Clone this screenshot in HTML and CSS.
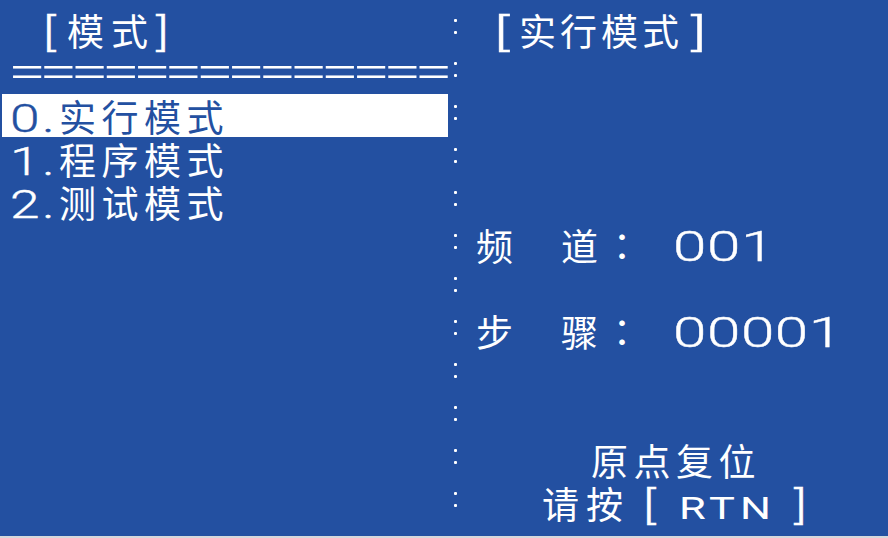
FILE: index.html
```html
<!DOCTYPE html>
<html lang="zh">
<head>
<meta charset="utf-8">
<title>模式</title>
<link rel="stylesheet" href="styles.css">
</head>
<body>
<div class="screen">
  <div class="row">
    <div class="l ltitle"><span class="bkt bo1">[</span><span class="cj t1">模式</span><span class="bkt bc1">]</span></div>
    <div class="sep"></div>
    <div class="r rtitle"><span class="bkt bo2">[</span><span class="cj t2">实行模式</span><span class="bkt bc2">]</span></div>
  </div>
  <div class="row">
    <div class="l rule"><span class="eq">==============</span></div>
    <div class="sep"></div>
    <div class="r"></div>
  </div>
  <div class="row">
    <div class="l item active"><span class="idx">0.</span><span class="cj menu">实行模式</span></div>
    <div class="sep"></div>
    <div class="r"></div>
  </div>
  <div class="row">
    <div class="l item"><span class="idx">1.</span><span class="cj menu">程序模式</span></div>
    <div class="sep"></div>
    <div class="r"></div>
  </div>
  <div class="row">
    <div class="l item"><span class="idx">2.</span><span class="cj menu">测试模式</span></div>
    <div class="sep"></div>
    <div class="r"></div>
  </div>
  <div class="row">
    <div class="l"></div>
    <div class="sep"></div>
    <div class="r field"><span class="cj k">频　道</span><span class="c">：</span><span class="v">001</span></div>
  </div>
  <div class="row">
    <div class="l"></div>
    <div class="sep"></div>
    <div class="r"></div>
  </div>
  <div class="row">
    <div class="l"></div>
    <div class="sep"></div>
    <div class="r field"><span class="cj k">步　骤</span><span class="c">：</span><span class="v">00001</span></div>
  </div>
  <div class="row">
    <div class="l"></div>
    <div class="sep"></div>
    <div class="r"></div>
  </div>
  <div class="row">
    <div class="l"></div>
    <div class="sep"></div>
    <div class="r"></div>
  </div>
  <div class="row">
    <div class="l"></div>
    <div class="sep"></div>
    <div class="r center"><span class="cj home">原点复位</span></div>
  </div>
  <div class="row">
    <div class="l"></div>
    <div class="sep"></div>
    <div class="r center"><span class="cj press">请按</span><span class="bkt bo3">[</span><span class="rtn">RTN</span><span class="bkt bc3">]</span></div>
  </div>
</div>
</body>
</html>
```
FILE: styles.css
```css
html, body {
  margin: 0;
  padding: 0;
}
body {
  width: 888px;
  height: 538px;
  overflow: hidden;
  background: #2350a1;
  color: #ffffff;
  font-family: "Noto Sans CJK SC", "DejaVu Sans", sans-serif;
  font-size: 37px;
}
.screen {
  box-sizing: border-box;
  height: 538px;
  padding: 8px 0 0 2px;
  border-bottom: 2px solid #d6d8dc;
}
.row {
  display: flex;
  height: 43px;
}
.l,
.r {
  height: 43px;
  box-sizing: border-box;
  padding-top: 2px;
  line-height: 41px;
  white-space: nowrap;
  display: flex;
  align-items: baseline;
}
.l {
  width: 446px;
}
.r {
  flex: 1;
}
.sep {
  width: 16px;
  box-sizing: border-box;
  padding: 11px 0 0 6px;
  display: flex;
  flex-direction: column;
  align-items: flex-start;
  gap: 9px;
}
.sep::before,
.sep::after {
  content: "";
  width: 3px;
  height: 3px;
  background: #ffffff;
  border-radius: 1px;
}

/* Latin glyphs: a wide face */
.bkt, .idx, .v, .rtn, .eq {
  display: inline-block;
  font-family: "Roboto", "Liberation Sans", sans-serif;
  font-weight: 300;
  -webkit-text-stroke: 0.35px currentColor;
  line-height: 0.95;
  transform: scaleX(1.4);
  transform-origin: left center;
}
.bkt {
  font-size: 38px;
}

/* left title */
.ltitle { padding-left: 41px; }
.bo1 { width: 24px; }
.t1 { letter-spacing: 7px; }
.bc1 { margin-left: 1px; }

/* right title */
.rtitle { padding-left: 30px; }
.bo2 { width: 25px; transform: scaleX(1.7); }
.t2 { letter-spacing: 4px; }
.bc2 { margin-left: 8px; transform: scaleX(1.7); }

/* rule */
.rule { padding-left: 6px; }
.eq {
  font-size: 46px;
  line-height: 0.8;
  -webkit-text-stroke: 0;
  letter-spacing: -4.6px;
  transform: scaleX(1.5);
}

/* menu */
.item { padding-left: 8px; }
.item.active {
  background: #ffffff;
  color: #2350a1;
}
.idx {
  font-size: 38px;
  letter-spacing: 1.8px;
  width: 49px;
}
.menu { letter-spacing: 5.5px; }

/* fields */
.field { padding-left: 12px; }
.k { letter-spacing: 5.5px; }
.c {
  display: inline-block;
  width: 42.5px;
  font-family: "Noto Sans CJK JP", sans-serif;
}
.v {
  margin-left: 27px;
  font-size: 43px;
  letter-spacing: 0.4px;
}

/* bottom */
.center { justify-content: center; }
.home { letter-spacing: 5.5px; }
.press { letter-spacing: 7px; }
.bo3 { margin-left: 13px; width: 36px; }
.rtn {
  font-size: 31px;
  font-weight: 400;
  -webkit-text-stroke: 0;
  letter-spacing: 3.6px;
  width: 115px;
}
.bc3 { width: 16px; }
```
